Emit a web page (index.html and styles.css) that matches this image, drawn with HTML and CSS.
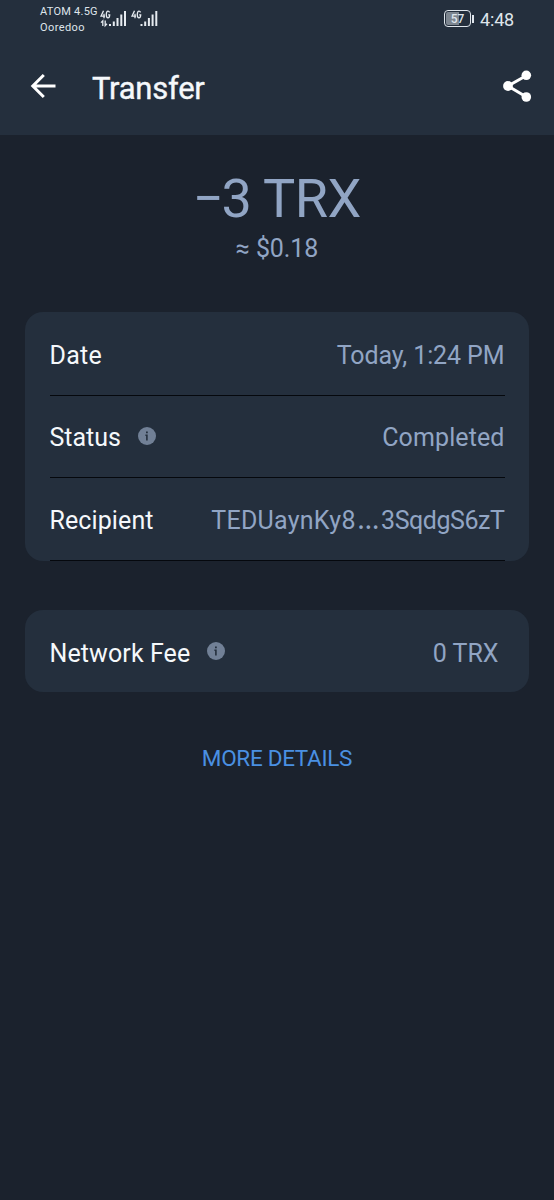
FILE: index.html
```html
<!DOCTYPE html>
<html lang="en">
<head>
<meta charset="utf-8">
<title>Transfer</title>
<link rel="stylesheet" href="styles.css">
</head>
<body>
<header class="header">
  <div class="status-bar">
    <div class="carriers"><span class="carrier-one">ATOM 4.5G</span><span class="carrier-two">Ooredoo</span></div>
    <svg class="signals" width="60" height="20" viewBox="0 0 60 20">
      <g fill="none" stroke="#e6ebf0" stroke-width="1.3">
        <path d="M3.5 .7L1 6.2H5M4 3.8V8.3M9.6 2.4Q8.8 1 7.8 1.2Q6.3 1.5 6.3 4.7Q6.3 7.8 8 7.8Q9.7 7.8 9.7 4.8H8.2"/>
        <path d="M34.5 .7L32 6.2H36M35 3.8V8.3M40.6 2.4Q39.8 1 38.8 1.2Q37.3 1.5 37.3 4.7Q37.3 7.8 39 7.8Q40.7 7.8 40.7 4.8H39.2"/>
        <path d="M1 12.6L2.8 10.8V16M5.2 10.6V15.6L7 13.8"/>
      </g>
      <path fill="#e6ebf0" d="M9 14h2v2H9zM12.8 11.5h2V16h-2zM16.5 8h2v8h-2zM20.3 4.5h2V16h-2zM24 1h2v15h-2zM40.5 14h2v2h-2zM44.2 11.5h2V16h-2zM47.9 8h2v8h-2zM51.6 4.5h2V16h-2zM55.3 1h2v15h-2z"/>
    </svg>
    <div class="battery"><span class="battery-case">57</span><span class="battery-tip"></span></div>
    <span class="clock">4:48</span>
  </div>
  <div class="toolbar">
    <svg class="back" width="28" height="28" viewBox="0 0 28 28"><path d="M26.5 14H4M14.8 3L3.8 14L14.8 25" fill="none" stroke="#fff" stroke-width="3"/></svg>
    <h1 class="title">Transfer</h1>
    <svg class="share" width="32" height="34" viewBox="0 0 32 34"><path d="M25.5 6.5L7 17L25.5 28" fill="none" stroke="#fff" stroke-width="3"/><g fill="#fff"><circle cx="25.3" cy="6.3" r="4.8"/><circle cx="7" cy="17" r="4.9"/><circle cx="25.3" cy="28" r="4.8"/></g></svg>
  </div>
</header>
<main>
  <section class="summary">
    <div class="amount"><span class="minus">−</span>3 TRX</div>
    <div class="fiat">≈ $0.18</div>
  </section>
  <section class="card">
    <div class="row"><span class="label date">Date</span><span class="value today">Today, 1:24 PM</span></div>
    <div class="row"><span class="label status">Status</span><svg class="info" width="18" height="18" viewBox="0 0 18 18"><circle cx="9" cy="9" r="9" fill="#718096"/><path d="M8 4.5h1.8v1.8H8zM7.4 7.6h2.3v5.8H8.1V9h-.7z" fill="#242f3d"/></svg><span class="value completed">Completed</span></div>
    <div class="row"><span class="label recipient">Recipient</span><span class="value address">TEDUaynKy8<span class="ellipsis">…</span><span class="address-end">3SqdgS6zT</span></span></div>
  </section>
  <section class="card fee-card">
    <div class="row"><span class="label network">Network Fee</span><svg class="info" width="18" height="18" viewBox="0 0 18 18"><circle cx="9" cy="9" r="9" fill="#718096"/><path d="M8 4.5h1.8v1.8H8zM7.4 7.6h2.3v5.8H8.1V9h-.7z" fill="#242f3d"/></svg><span class="value fee">0 TRX</span></div>
  </section>
  <a class="more">MORE DETAILS</a>
</main>
</body>
</html>
```
FILE: styles.css
```css
* { box-sizing: border-box; }
body {
  margin: 0;
  min-height: 1200px;
  background: #1b222d;
  color: #f5f8fb;
  font-family: Roboto, "Noto Sans", sans-serif;
}
.header { height: 135px; background: #242f3d; }
.status-bar { display: flex; height: 38px; padding: 0 40px 0 40px; color: #dfe5eb; }
.carriers { display: flex; flex-direction: column; width: 60px; padding-top: 4px; font-size: 11px; line-height: 16px; white-space: nowrap; }
.carrier-one { letter-spacing: 0.25px; }
.carrier-two { letter-spacing: 0.4px; }
.signals { margin-top: 10px; }
.battery { display: flex; align-items: center; gap: 1px; height: 17px; margin: 10px 6px 0 auto; }
.battery-case {
  width: 27px;
  height: 17px;
  border: 1.5px solid #dfe5eb;
  border-radius: 4px;
  background: linear-gradient(90deg, #7d8690 57%, transparent 57%);
  background-clip: content-box;
  padding: 1px;
  font-size: 12px;
  line-height: 14px;
  font-weight: 500;
  text-align: center;
}
.battery-tip { width: 2px; height: 8px; background: #dfe5eb; }
.clock { padding-top: 9px; font-size: 18px; line-height: 21px; letter-spacing: -0.2px; }
.toolbar { display: flex; align-items: center; height: 97px; padding: 0 21px 0 29px; }
.back { margin: -1px 35px 0 0; }
.title { margin: 4px 0 0; font-size: 31px; line-height: 36px; font-weight: 400; letter-spacing: -0.25px; -webkit-text-stroke: 0.4px currentColor; }
.share { margin: -1px 0 0 auto; }
.summary { height: 177px; padding-top: 33px; color: #91a5c4; text-align: center; }
.amount { font-size: 54px; line-height: 62px; letter-spacing: -0.5px; }
.minus { margin-right: -2px; }
.fiat { margin-top: 3px; font-size: 25px; line-height: 32px; letter-spacing: -0.1px; }
.card { height: 249px; margin: 0 25px; padding: 0 24.5px; border-radius: 18px; background: #242f3d; }
.row { display: flex; align-items: center; height: 83px; padding-top: 3px; border-bottom: 1px solid #05080d; font-size: 25px; line-height: 30px; white-space: nowrap; }
.row:first-child { height: 84px; padding-top: 4px; }
.row:nth-child(2) { height: 82px; }
.value { margin-left: auto; color: #91a5c4; }
.date { letter-spacing: 0.3px; }
.recipient, .network { letter-spacing: 0.1px; }
.completed { letter-spacing: 0.1px; }
.today { letter-spacing: -0.1px; }
.address { letter-spacing: 0.25px; }
.address-end { letter-spacing: -0.45px; }
.ellipsis { padding: 0 1.5px; font-family: "Noto Sans", sans-serif; font-size: 28px; line-height: 0; }
.info { margin: -5px 0 0 17px; }
.fee-card { height: 82px; margin-top: 49px; }
.fee-card .row:first-child { height: 82px; padding: 5px 6px 0 0; border: 0; }
.more { display: block; margin-top: 52px; color: #4a90e2; font-size: 22.5px; line-height: 28px; letter-spacing: -0.3px; text-align: center; }
```
